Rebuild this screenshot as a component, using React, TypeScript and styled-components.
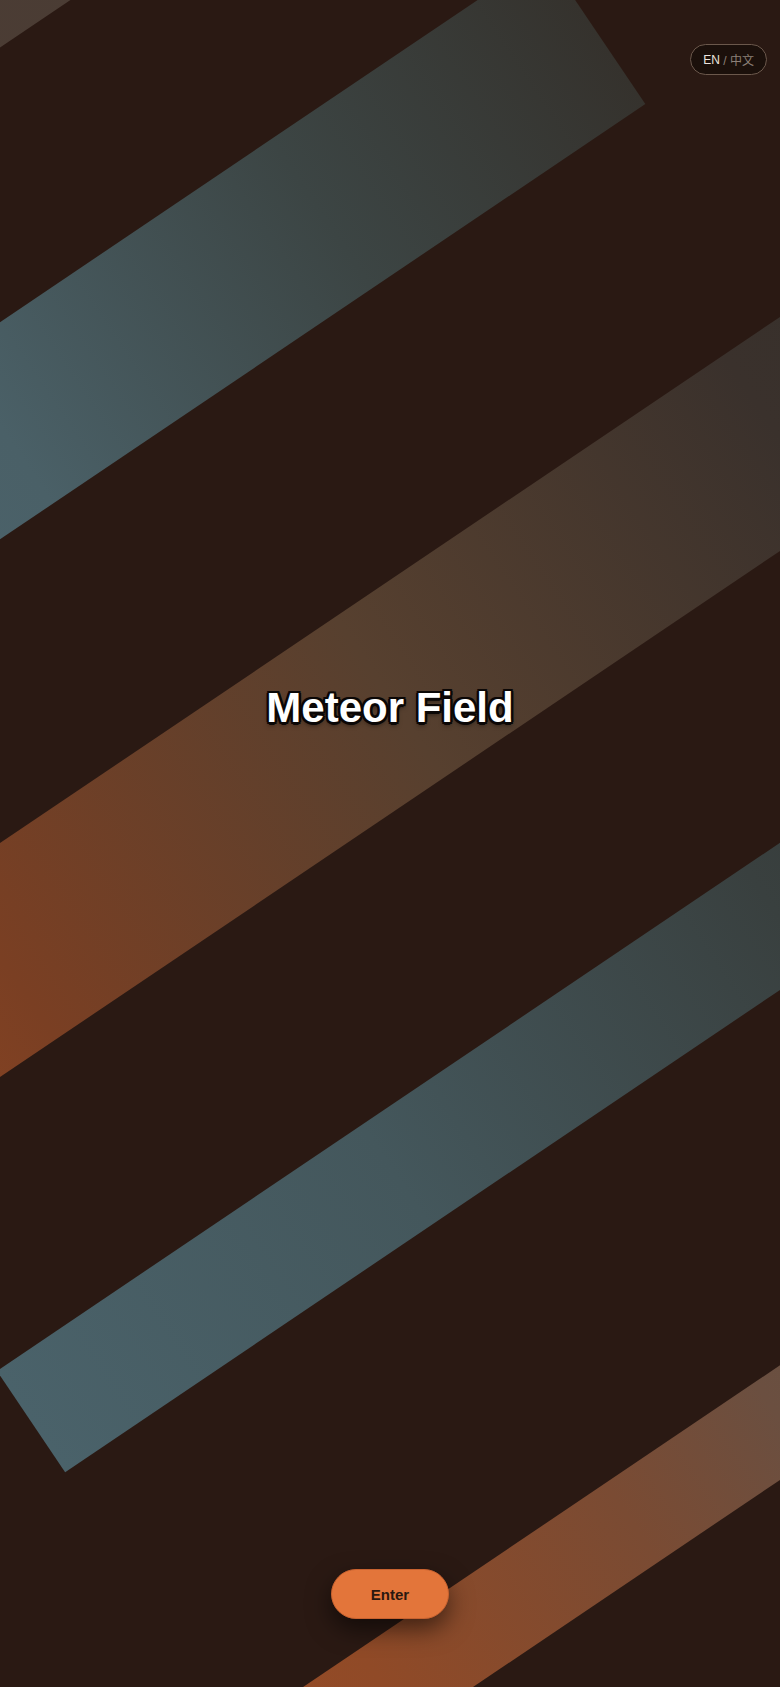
import React from 'react';
import styled, { createGlobalStyle } from 'styled-components';

type Band = {
  x: number;
  y: number;
  len: number;
  thick: number;
  fill: string;
};

// centre point, length and thickness of each rotated stripe
const bands: Band[] = [
  {
    x: 120,
    y: -142,
    len: 900,
    thick: 180,
    fill: 'linear-gradient(90deg, #4c3d34 0%, #4a3c34 45%, #3a302b 100%)',
  },
  {
    x: 139,
    y: 337,
    len: 1100,
    thick: 180,
    fill: 'linear-gradient(90deg, #4d6670 0%, #4a6067 35%, #3c4544 70%, #35322d 100%)',
  },
  {
    x: 390,
    y: 697,
    len: 1300,
    thick: 194,
    fill: 'linear-gradient(90deg, #8a4422 0%, #7a3f23 14%, #57402f 50%, #3a312c 86%, #36302b 100%)',
  },
  {
    x: 487,
    y: 1114,
    len: 1100,
    thick: 122,
    fill: 'linear-gradient(90deg, #4a626a 0%, #44575c 40%, #39403f 82%, #363a38 100%)',
  },
  {
    x: 520,
    y: 1598,
    len: 900,
    thick: 95,
    fill: 'linear-gradient(90deg, #9a4d25 0%, #904a27 32%, #7a4b33 65%, #6b4f40 85%, #665042 100%)',
  },
];

export default function App() {
  return (
    <Page>
      <GlobalStyle />
      <Backdrop>
        {bands.map((b, i) => (
          <Stripe key={i} $x={b.x} $y={b.y} $len={b.len} $thick={b.thick} $fill={b.fill} />
        ))}
      </Backdrop>

      <TopBar>
        <LangToggle type="button">
          <Active>EN</Active>
          <Muted> / 中文</Muted>
        </LangToggle>
      </TopBar>

      <Main>
        <Title>Meteor Field</Title>
      </Main>

      <Footer>
        <EnterButton type="button">Enter</EnterButton>
      </Footer>
    </Page>
  );
}

const GlobalStyle = createGlobalStyle`
  html, body {
    margin: 0;
    padding: 0;
    background: #2a1913;
  }
  * {
    box-sizing: border-box;
  }
`;

const Page = styled.div`
  position: relative;
  display: flex;
  flex-direction: column;
  width: 100%;
  height: 100vh;
  overflow: hidden;
  background: #2a1913;
  font-family: 'Liberation Sans', Arial, sans-serif;
`;

const Backdrop = styled.div`
  position: absolute;
  inset: 0;
  overflow: hidden;
  pointer-events: none;
`;

const Stripe = styled.div<{ $x: number; $y: number; $len: number; $thick: number; $fill: string }>`
  position: absolute;
  left: ${(p) => p.$x}px;
  top: ${(p) => p.$y}px;
  width: ${(p) => p.$len}px;
  height: ${(p) => p.$thick}px;
  background: ${(p) => p.$fill};
  transform: translate(-50%, -50%) rotate(-34deg);
`;

const TopBar = styled.header`
  position: relative;
  display: flex;
  justify-content: flex-end;
  padding: 44px 13px 0;
`;

const LangToggle = styled.button`
  display: flex;
  align-items: center;
  height: 31px;
  padding: 0 12px;
  border: 1px solid #6b584c;
  border-radius: 16px;
  background: rgba(18, 10, 7, 0.6);
  font-family: 'Liberation Sans', 'Noto Sans CJK SC', sans-serif;
  font-size: 12px;
  white-space: pre;
  cursor: pointer;
`;

const Active = styled.span`
  color: #ece4de;
`;

const Muted = styled.span`
  color: #8c8078;
`;

const Main = styled.main`
  position: relative;
  display: flex;
  justify-content: center;
  padding-top: 608px;
  flex: 1;
`;

const Title = styled.h1`
  margin: 0;
  height: 50px;
  line-height: 50px;
  font-size: 42px;
  font-weight: 700;
  letter-spacing: 0;
  color: #ffffff;
  text-shadow:
    2.5px 0 0 #0b0706,
    -2.5px 0 0 #0b0706,
    0 2.5px 0 #0b0706,
    0 -2.5px 0 #0b0706,
    2px 2px 0 #0b0706,
    -2px 2px 0 #0b0706,
    2px -2px 0 #0b0706,
    -2px -2px 0 #0b0706,
    0 3px 5px rgba(0, 0, 0, 0.6);
`;

const Footer = styled.footer`
  position: relative;
  display: flex;
  justify-content: center;
  padding-bottom: 68px;
`;

const EnterButton = styled.button`
  width: 118px;
  height: 50px;
  border: 1px solid #c8622f;
  border-radius: 25px;
  background: #e3753a;
  color: #2a1810;
  font-family: 'Liberation Sans', Arial, sans-serif;
  font-size: 15px;
  font-weight: 700;
  box-shadow: 0 10px 24px rgba(0, 0, 0, 0.55);
  cursor: pointer;
`;
